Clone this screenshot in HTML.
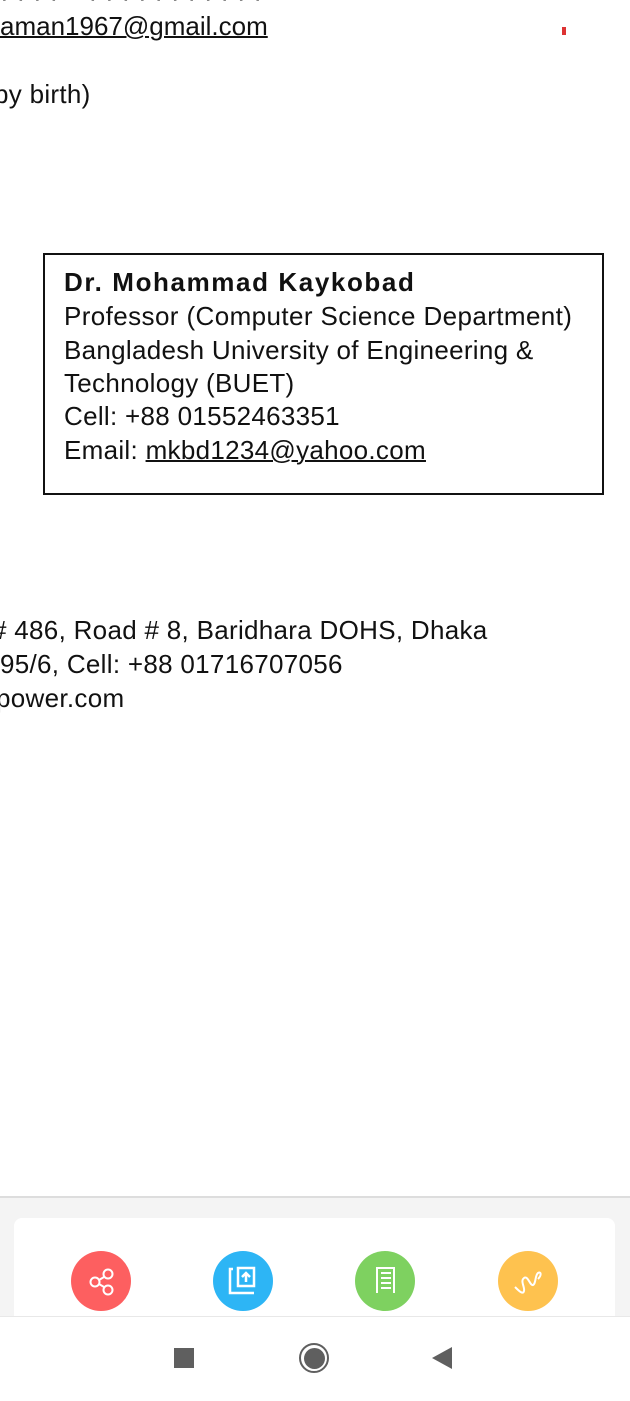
<!DOCTYPE html>
<html><head><style>
body{margin:0;width:630px;height:1400px;position:relative;background:#fff;font-family:"Liberation Sans",sans-serif;color:#111;overflow:hidden}
.t{position:absolute;font-size:26px;white-space:nowrap;line-height:34px;letter-spacing:0.3px}
u{text-decoration:underline;text-decoration-thickness:1.5px}
.box{position:absolute;left:43px;top:253px;width:557px;height:238px;border:2px solid #111}
.c{position:absolute;width:60px;height:60px;border-radius:50%;top:1251px}
</style></head><body>
<div class="t" style="left:0;top:-20px">· · · · &nbsp;&nbsp; · · · · · · · · · · ·</div>
<div class="t" style="left:0;top:9px;letter-spacing:0"><u>aman1967@gmail.com</u></div>
<div style="position:absolute;left:562px;top:27px;width:4px;height:8px;background:#d33"></div>
<div class="t" style="left:-6px;top:77px">by birth)</div>
<div class="box"></div>
<div class="t" style="left:64px;top:265px;font-weight:bold;letter-spacing:1.6px">Dr. Mohammad Kaykobad</div>
<div class="t" style="left:64px;top:299px;letter-spacing:0.4px">Professor (Computer Science Department)</div>
<div class="t" style="left:64px;top:333px">Bangladesh University of Engineering &amp;</div>
<div class="t" style="left:64px;top:366px">Technology (BUET)</div>
<div class="t" style="left:64px;top:399px">Cell: +88 01552463351</div>
<div class="t" style="left:64px;top:433px">Email: <u>mkbd1234@yahoo.com</u></div>
<div class="t" style="left:-8px;top:613px"># 486, Road # 8, Baridhara DOHS, Dhaka</div>
<div class="t" style="left:0;top:647px">95/6, Cell: +88 01716707056</div>
<div class="t" style="left:-4px;top:681px">power.com</div>
<div style="position:absolute;left:0;top:1196px;width:630px;height:2px;background:#ddd"></div>
<div style="position:absolute;left:0;top:1198px;width:630px;height:120px;background:#f4f4f4"></div>
<div style="position:absolute;left:14px;top:1218px;width:601px;height:110px;background:#fff;border-radius:8px"></div>
<div class="c" style="left:71px;background:#fd5f60"><svg width="60" height="60" viewBox="0 0 60 60" fill="none" stroke="#fff" stroke-width="2"><circle cx="37" cy="23" r="4.5"/><circle cx="24" cy="31" r="4.5"/><circle cx="37" cy="39" r="4.5"/><path d="M28 29l5-3M28 33l5 3"/></svg></div>
<div class="c" style="left:213px;background:#2db5f5"><svg width="60" height="60" viewBox="0 0 60 60" fill="none" stroke="#fff" stroke-width="2.5"><path d="M20 18h-3v24h24M17 30v4"/><rect x="25" y="17" width="16" height="18"/><path d="M33 31v-9M29 26l4-4 4 4"/></svg></div>
<div class="c" style="left:355px;background:#7ed160"><svg width="60" height="60" viewBox="0 0 60 60" fill="none" stroke="#fff" stroke-width="2"><path d="M22 42V17h17v25"/><path d="M26 22h10M26 27h10M26 32h10M26 37h10"/></svg></div>
<div class="c" style="left:498px;background:#fec24f"><svg width="60" height="60" viewBox="0 0 60 60" fill="none" stroke="#fff" stroke-width="2"><path d="M17 36c4 4 8 8 9 4s-4-10 0-13 6 8 9 7 2-10 5-12 4 2 0 6"/></svg></div>
<div style="position:absolute;left:0;top:1316px;width:630px;height:84px;background:#fff;border-top:1px solid #e8e8e8"></div>
<div style="position:absolute;left:174px;top:1348px;width:20px;height:20px;background:#5f5f5f"></div>
<div style="position:absolute;left:299px;top:1343px;width:26px;height:26px;border:2.5px solid #5f5f5f;border-radius:50%"></div>
<div style="position:absolute;left:304px;top:1348px;width:21px;height:21px;background:#5f5f5f;border-radius:50%"></div>
<div style="position:absolute;left:432px;top:1347px;width:0;height:0;border-top:11px solid transparent;border-bottom:11px solid transparent;border-right:20px solid #5f5f5f"></div>
</body></html>
